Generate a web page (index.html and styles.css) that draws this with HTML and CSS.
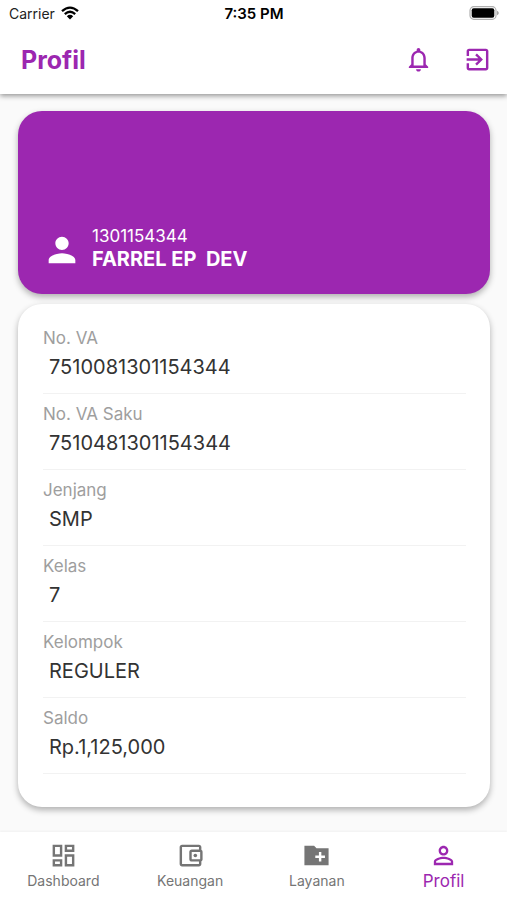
FILE: index.html
```html
<!DOCTYPE html>
<html lang="id">
<head>
  <meta charset="utf-8">
  <meta name="viewport" content="width=device-width, initial-scale=1">
  <title>Profil</title>
  <link rel="stylesheet" href="styles.css">
</head>
<body>
  <header class="top">
    <div class="status">
      <div class="carrier">
        <span>Carrier</span>
        <svg class="wifi" viewBox="0 0 18 14" aria-hidden="true">
          <path d="M1 5.2Q9-2 17 5.2M3.8 8.1Q9 3.5 14.2 8.1" fill="none" stroke="#000" stroke-width="2.3"/>
          <path d="M5.8 10.2Q9 7.4 12.2 10.2L9 13.6z"/>
        </svg>
      </div>
      <span class="time">7:35 PM</span>
      <svg class="battery" viewBox="0 0 30 14" aria-hidden="true">
        <rect x="1" y=".7" width="26" height="12.6" rx="3.8" fill="#fff" stroke="#b0b0b0" stroke-width="1.2"/>
        <rect x="2.7" y="2.3" width="22.6" height="9.4" rx="2"/>
        <path d="M28 4.8c2.3.8 2.3 3.6 0 4.4z" fill="#a6a6a6"/>
      </svg>
    </div>
    <div class="appbar">
      <h1>Profil</h1>
      <div class="actions">
        <button type="button" aria-label="Notifikasi">
          <svg class="icon" viewBox="0 0 24 24"><path d="M12 22c1.1 0 2-.9 2-2h-4c0 1.1.9 2 2 2zm6-6v-5c0-3.07-1.63-5.64-4.5-6.32V4c0-.83-.67-1.5-1.5-1.5s-1.5.67-1.5 1.5v.68C7.64 5.36 6 7.92 6 11v5l-2 2v1h16v-1l-2-2zm-2 1H8v-6c0-2.48 1.51-4.5 4-4.5s4 2.02 4 4.5v6z"/></svg>
        </button>
        <button type="button" aria-label="Keluar">
          <svg class="icon" viewBox="0 0 24 24"><path d="M10.09 15.59L11.5 17l5-5-5-5-1.41 1.41L12.67 11H3v2h9.67l-2.58 2.59zM19 3H5c-1.11 0-2 .9-2 2v4h2V5h14v14H5v-4H3v4c0 1.1.89 2 2 2h14c1.1 0 2-.9 2-2V5c0-1.1-.9-2-2-2z"/></svg>
        </button>
      </div>
    </div>
  </header>

  <main class="content">
    <section class="card member">
      <svg class="avatar" viewBox="0 0 24 24" aria-hidden="true"><path d="M12 12c2.21 0 4-1.79 4-4s-1.79-4-4-4-4 1.79-4 4 1.79 4 4 4zm0 2c-2.67 0-8 1.34-8 4v2h16v-2c0-2.66-5.33-4-8-4z"/></svg>
      <div>
        <p class="number">1301154344</p>
        <p class="name">FARREL EP&nbsp; DEV</p>
      </div>
    </section>
    <dl class="card details">
      <div class="row"><dt>No. VA</dt><dd>7510081301154344</dd></div>
      <div class="row"><dt>No. VA Saku</dt><dd>7510481301154344</dd></div>
      <div class="row"><dt>Jenjang</dt><dd>SMP</dd></div>
      <div class="row"><dt>Kelas</dt><dd>7</dd></div>
      <div class="row"><dt>Kelompok</dt><dd>REGULER</dd></div>
      <div class="row"><dt>Saldo</dt><dd>Rp.1,125,000</dd></div>
    </dl>
  </main>

  <nav class="tabs">
    <a href="#dashboard">
      <svg class="icon" viewBox="0 0 24 24"><path d="M19 5v2h-4V5h4M9 5v6H5V5h4m10 8v6h-4v-6h4M9 17v2H5v-2h4M21 3h-8v6h8V3zM11 3H3v10h8V3zm10 8h-8v10h8V11zm-10 4H3v6h8v-6z"/></svg>
      <span>Dashboard</span>
    </a>
    <a href="#keuangan">
      <svg class="icon" viewBox="0 0 24 24"><path d="M21 7.28V5c0-1.1-.9-2-2-2H5c-1.11 0-2 .9-2 2v14c0 1.1.89 2 2 2h14c1.1 0 2-.9 2-2v-2.28c.59-.35 1-.98 1-1.72V9c0-.74-.41-1.37-1-1.72zM20 9v6h-7V9h7zM5 19V5h14v2h-6c-1.1 0-2 .9-2 2v6c0 1.1.9 2 2 2h6v2H5z"/><circle cx="16" cy="12" r="1.5"/></svg>
      <span>Keuangan</span>
    </a>
    <a href="#layanan">
      <svg class="icon" viewBox="0 0 24 24"><path d="M22 6H12l-2-2H2v16h20V6zm-3 8h-3v3h-2v-3h-3v-2h3V9h2v3h3v2z"/></svg>
      <span>Layanan</span>
    </a>
    <a href="#profil" class="active" aria-current="page">
      <svg class="icon" viewBox="0 0 24 24"><path d="M12 5.9c1.16 0 2.1.94 2.1 2.1s-.94 2.1-2.1 2.1S9.9 9.16 9.9 8s.94-2.1 2.1-2.1m0 9c2.97 0 6.1 1.46 6.1 2.1v1.1H5.9V17c0-.64 3.13-2.1 6.1-2.1M12 4C9.79 4 8 5.79 8 8s1.79 4 4 4 4-1.79 4-4-1.79-4-4-4zm0 9c-2.67 0-8 1.34-8 4v3h16v-3c0-2.66-5.33-4-8-4z"/></svg>
      <span>Profil</span>
    </a>
  </nav>
</body>
</html>
```
FILE: styles.css
```css
:root {
  --purple: #9c27b0;
}

* {
  box-sizing: border-box;
}

body {
  margin: 0;
  min-height: 100vh;
  display: flex;
  flex-direction: column;
  background: #fafafa;
  color: #333;
  font-family: Inter, "Liberation Sans", sans-serif;
}

h1, p, dl, dd {
  margin: 0;
}

.top {
  background: #fff;
  box-shadow: 0 2px 5px rgba(0, 0, 0, 0.4);
}

.status {
  display: grid;
  grid-template-columns: 1fr auto 1fr;
  align-items: center;
  height: 26px;
  padding: 0 8px 0 9px;
  color: #000;
  font-size: 14px;
}

.carrier {
  display: flex;
  align-items: center;
  gap: 6px;
  color: #222;
}

.wifi {
  width: 18px;
  height: 14px;
}

.time {
  font-size: 15px;
  font-weight: 600;
}

.battery {
  width: 30px;
  height: 14px;
  justify-self: end;
}

.appbar {
  display: flex;
  align-items: center;
  justify-content: space-between;
  height: 68px;
  padding: 0 15px 2px 21px;
  color: var(--purple);
}

h1 {
  padding-top: 2px;
  font-size: 25px;
  line-height: 32px;
  font-weight: 700;
}

.actions {
  display: flex;
  gap: 30px;
}

button {
  display: flex;
  padding: 0;
  border: 0;
  background: none;
  color: inherit;
}

.icon {
  width: 29px;
  height: 29px;
  fill: currentColor;
}

.content {
  flex: 1;
  display: flex;
  flex-direction: column;
  gap: 10px;
  padding: 17px 17px 24px 18px;
}

.card {
  border-radius: 24px;
  box-shadow: 0 3px 6px rgba(0, 0, 0, 0.3);
}

.member {
  display: flex;
  align-items: flex-end;
  gap: 10px;
  min-height: 183px;
  padding: 24px;
  background: var(--purple);
  color: #fff;
}

.avatar {
  width: 40px;
  height: 40px;
  fill: currentColor;
}

.number {
  font-size: 17px;
  line-height: 24px;
}

.name {
  font-size: 20px;
  line-height: 22px;
  font-weight: 700;
}

.details {
  padding: 22px 24px 33px 25px;
  background: #fff;
}

.row {
  height: 76px;
  padding-top: 8px;
  border-bottom: 1px solid #f2f2f2;
}

.row:first-child {
  height: 68px;
  padding-top: 0;
}

dt {
  color: #9e9e9e;
  font-size: 17px;
  line-height: 24px;
}

dd {
  padding-left: 6px;
  font-size: 20px;
  line-height: 34px;
}

.tabs {
  display: grid;
  grid-template-columns: repeat(4, 1fr);
  height: 68px;
  background: #fff;
  box-shadow: 0 -1px 2px rgba(0, 0, 0, 0.04);
}

.tabs a {
  display: flex;
  flex-direction: column;
  align-items: center;
  padding-top: 9px;
  color: #757575;
  font-size: 14px;
  line-height: 22px;
  text-decoration: none;
}

.tabs .active {
  color: var(--purple);
  font-size: 17px;
}
```
